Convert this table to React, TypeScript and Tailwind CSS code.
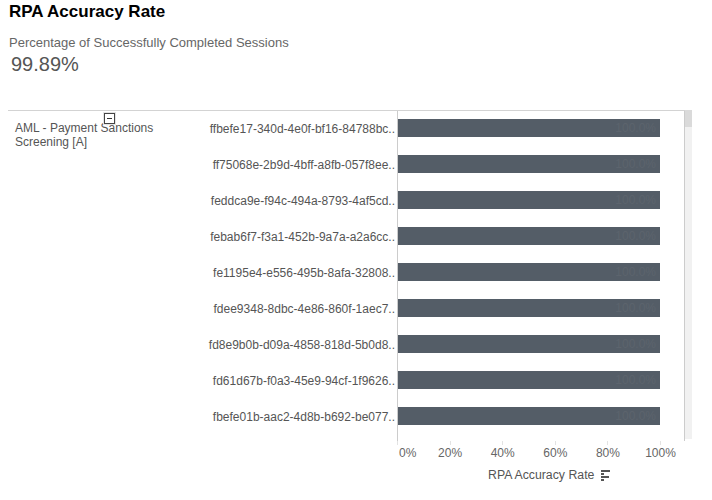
import React from "react";

const rows = [
  "ffbefe17-340d-4e0f-bf16-84788bc..",
  "ff75068e-2b9d-4bff-a8fb-057f8ee..",
  "feddca9e-f94c-494a-8793-4af5cd..",
  "febab6f7-f3a1-452b-9a7a-a2a6cc..",
  "fe1195e4-e556-495b-8afa-32808..",
  "fdee9348-8dbc-4e86-860f-1aec7..",
  "fd8e9b0b-d09a-4858-818d-5b0d8..",
  "fd61d67b-f0a3-45e9-94cf-1f9626..",
  "fbefe01b-aac2-4d8b-b692-be077..",
];

const ticks = [0, 20, 40, 60, 80, 100];

const SortIcon = () => (
  <div className="flex flex-col gap-[1.3px] pt-[1px]">
    <div className="h-[2px] w-[9px] bg-[#555]" />
    <div className="h-[2px] w-[3px] bg-[#555]" />
    <div className="h-[2px] w-[8px] bg-[#555]" />
    <div className="h-[2px] w-[3px] bg-[#555]" />
  </div>
);

export default function App() {
  return (
    <div className="w-[712px] h-[500px] overflow-hidden bg-white font-['Liberation_Sans',Arial,sans-serif]">
      {/* header */}
      <div className="pl-[9px] pt-[2px]">
        <h1 className="text-[17px] leading-[20px] font-bold text-black">
          RPA Accuracy Rate
        </h1>
        <div className="mt-[13px] text-[13px] leading-[15px] text-[#666]">
          Percentage of Successfully Completed Sessions
        </div>
        <div className="mt-[3px] pl-[2px] text-[20px] leading-[23px] text-[#555]">
          99.89%
        </div>
      </div>

      {/* chart body */}
      <div className="mt-[34px] ml-[8px] flex">
        <div className="flex h-[331px] w-[677px] border-t border-[#d3d3d3]">
          <div className="relative w-[192px] pl-[7px] pt-[10px] text-[12px] leading-[14px] text-[#555]">
            AML - Payment Sanctions
            <br />
            Screening [A]
            <div className="absolute left-[96px] top-[2px] flex h-[11px] w-[11px] items-center justify-center border border-[#444] bg-white ring-1 ring-[#e4e4e4]">
              <div className="h-[1px] w-[5px] bg-[#333]" />
            </div>
          </div>
          <div className="w-[197px] overflow-hidden">
            {rows.map((r) => (
              <div
                key={r}
                className="h-[36px] pr-[2px] pt-[11px] text-right text-[12px] leading-[14px] text-[#555] whitespace-nowrap"
              >
                {r}
              </div>
            ))}
          </div>
          <div className="w-[288px] overflow-hidden border-l border-r border-[#ccc]">
            {rows.map((r) => (
              <div key={r} className="h-[36px] pt-[8px]">
                <div className="flex h-[18px] w-[262px] items-center justify-end bg-[#545d67] pr-[4px] text-[12px] leading-[14px] text-[#5c646d]">
                  100.0%
                </div>
              </div>
            ))}
          </div>
        </div>
        <div className="h-[329px] w-[7px] bg-[#f1f1f1]">
          <div className="h-[17px] w-full bg-[#dadada]" />
        </div>
      </div>

      {/* x axis */}
      <div className="flex">
        <div className="w-[397px] shrink-0" />
        <div className="relative h-[40px] w-[264px]">
          {ticks.map((t) => (
            <div
              key={t}
              className="absolute top-0 h-[4px] w-[1px] bg-[#e3e3e3]"
              style={{ left: `${(t / 100) * 263}px` }}
            />
          ))}
          {ticks.map((t) => (
            <div
              key={`l${t}`}
              className={
                t === 0
                  ? "absolute top-[5px] left-[2px] text-[12px] leading-[14px] text-[#666]"
                  : "absolute top-[5px] -translate-x-1/2 text-[12px] leading-[14px] text-[#666]"
              }
              style={t === 0 ? undefined : { left: `${(t / 100) * 263 + 0.5}px` }}
            >
              {t}%
            </div>
          ))}
        </div>
      </div>
      <div className="-mt-[13px] flex items-center gap-[7px] pl-[488px]">
        <span className="text-[12.3px] leading-[14px] text-[#555]">
          RPA Accuracy Rate
        </span>
        <SortIcon />
      </div>
    </div>
  );
}
